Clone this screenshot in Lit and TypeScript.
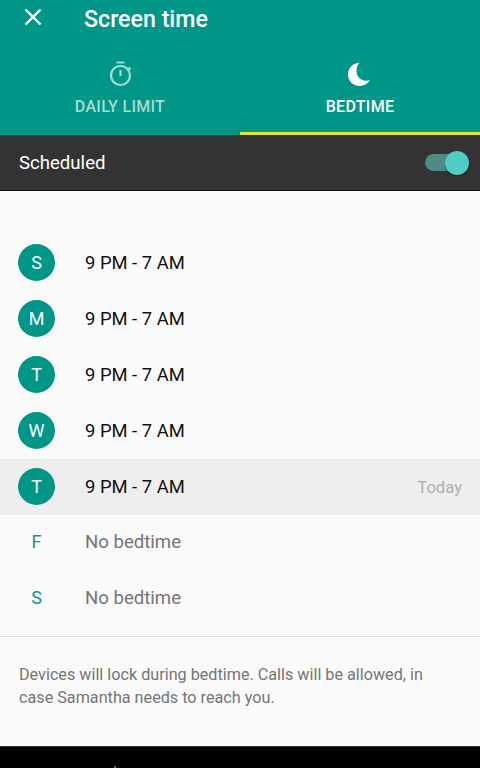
import { LitElement, html, css } from "lit";
import { customElement } from "lit/decorators.js";

const days = [
  { d: "S", t: "9 PM - 7 AM", on: true },
  { d: "M", t: "9 PM - 7 AM", on: true },
  { d: "T", t: "9 PM - 7 AM", on: true },
  { d: "W", t: "9 PM - 7 AM", on: true },
  { d: "T", t: "9 PM - 7 AM", on: true, today: true },
  { d: "F", t: "No bedtime", on: false },
  { d: "S", t: "No bedtime", on: false },
];

@customElement("app-root")
export class AppRoot extends LitElement {
  static styles = css`
    :host { display: flex; flex-direction: column; width: 480px; height: 768px; overflow: hidden; background: #fafafa; font-family: Roboto, "Liberation Sans", sans-serif; }
    .top { background: #009688; color: #fff; height: 135px; display: flex; flex-direction: column; flex: none; }
    .bar { display: flex; align-items: center; padding-left: 20px; flex: none; padding-bottom: 14px; box-sizing: border-box; height: 47px; }
    .bar svg { width: 26px; height: 26px; display: block; }
    .title { margin-left: 38px; margin-top: 4px; font-size: 23.2px; font-weight: 500; }
    .tabs { display: flex; flex: 1; }
    .tab { flex: 1; display: flex; flex-direction: column; align-items: center; box-sizing: border-box; padding-top: 13px; font-size: 16px; font-weight: 500; letter-spacing: .3px; color: #a6dcd5; }
    .tab.sel { color: #fff; border-bottom: 3px solid #e5e22e; }
    .tab svg { width: 28px; height: 28px; display: block; margin-bottom: 9px; }
    .sched { flex: none; height: 55px; background: #333; border-bottom: 1px solid #111; display: flex; align-items: center; justify-content: space-between; padding: 0 11px 0 19px; color: #fff; font-size: 18.6px; }
    .toggle { position: relative; width: 44px; height: 24px; display: flex; align-items: center; }
    .track { width: 36px; height: 17px; border-radius: 9px; background: #4f8a85; }
    .thumb { position: absolute; right: 0; top: 0; width: 24px; height: 24px; border-radius: 50%; background: #4dcdc3; box-shadow: 0 1px 1px rgba(0,0,0,.5); }
    .list { padding-top: 43.5px; flex: none; }
    .row { height: 56px; display: flex; align-items: center; padding: 0 18px; box-sizing: border-box; font-size: 18.4px; color: #111; }
    .row.today { background: #eee; }
    .day { width: 37px; height: 37px; border-radius: 50%; display: flex; align-items: center; justify-content: center; flex: none; color: #fff; background: #009688; font-size: 18px; margin-right: 30px; }
    .day.off { background: none; color: #1d8f82; padding-bottom: 2px; box-sizing: border-box; }
    .off-t { color: #757575; font-size: 18.6px; padding-bottom: 2px; }
    .time { flex: 1; }
    .tag { color: #b0b0b0; font-size: 16.6px; padding-top: 2px; }
    .rule { height: 1px; background: #ddd; margin-top: 9.5px; flex: none; }
    .note { flex: 1; padding: 25.5px 40px 0 19px; color: #757575; font-size: 16.2px; line-height: 23.4px; }
    .nav { flex: none; height: 21px; background: #000; border-top: 1px solid #333; position: relative; }
    .nav i { position: absolute; left: 114px; bottom: 0; width: 2px; height: 2px; background: #666; }
  `;

  render() {
    return html`
      <div class="top">
        <div class="bar">
          <svg viewBox="0 0 26 26"><path d="M5.500 5.500 20.500 20.500M20.500 5.500 5.500 20.500" stroke="#fff" stroke-width="2.400" fill="none"/></svg>
          <div class="title">Screen time</div>
        </div>
        <div class="tabs">
          <div class="tab">
            <svg viewBox="0 0 28 28" fill="none" stroke="#a6dcd5" stroke-width="2.200">
              <circle cx="14.500" cy="15.500" r="9.500"/>
              <path d="M10.500 2.500h8M14.500 10v6M22.500 7.500l2 2"/>
            </svg>
            DAILY LIMIT
          </div>
          <div class="tab sel">
            <svg viewBox="0 0 28 28"><path fill="#fff" d="M13.500 2.800C7 2.800 2 8 2 14.500 2 21 7.200 26 13.500 26c4.300 0 8-2.300 10.500-6-1.200.5-2.500.7-3.700.7-5.500 0-9.800-4.200-9.800-9.700 0-3.500 1.200-6.200 3-8.200z"/></svg>
            BEDTIME
          </div>
        </div>
      </div>
      <div class="sched">
        <span>Scheduled</span>
        <div class="toggle"><div class="track"></div><div class="thumb"></div></div>
      </div>
      <div class="list">
        ${days.map(r => html`
          <div class="row ${r.today ? "today" : ""}">
            <div class="day ${r.on ? "" : "off"}">${r.d}</div>
            <div class="time ${r.on ? "" : "off-t"}">${r.t}</div>
            ${r.today ? html`<div class="tag">Today</div>` : ""}
          </div>`)}
      </div>
      <div class="rule"></div>
      <div class="note">Devices will lock during bedtime. Calls will be allowed, in case Samantha needs to reach you.</div>
      <div class="nav"><i></i></div>
    `;
  }
}
